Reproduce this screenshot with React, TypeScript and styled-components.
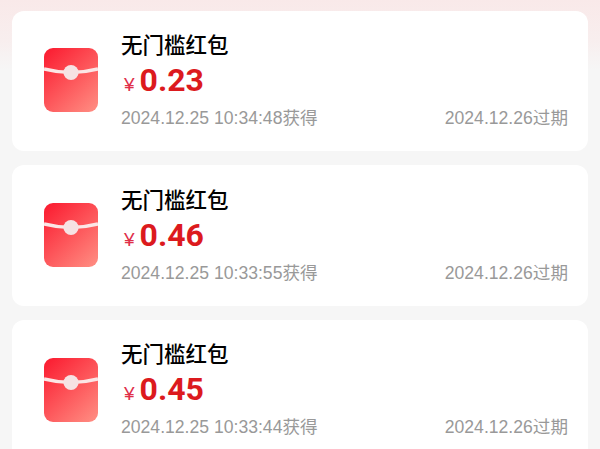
import React from 'react';
import styled, { createGlobalStyle } from 'styled-components';

const GlobalStyle = createGlobalStyle`
  html, body {
    margin: 0;
    padding: 0;
    height: 100%;
    overflow: hidden;
    background-color: #f6f6f6;
  }
`;

const Page = styled.div`
  display: flex;
  flex-direction: column;
  gap: 14px;
  height: 449px;
  padding: 10.5px 12px 0;
  box-sizing: border-box;
  overflow: hidden;
  background: linear-gradient(180deg, #f9e9e9 0, #f8eeee 40px, #f6f6f6 70px);
  font-family: 'Liberation Sans', 'Noto Sans CJK SC', sans-serif;
`;

const Card = styled.div`
  display: flex;
  flex-shrink: 0;
  align-items: center;
  height: 140.7px;
  padding: 0 20px 0 32px;
  box-sizing: border-box;
  background-color: #ffffff;
  border-radius: 12px;
`;

const EnvelopeIcon = styled.svg`
  flex-shrink: 0;
  width: 54px;
  height: 64px;
  margin: 0 23px 1px 0;
`;

const Info = styled.div`
  flex: 1;
  min-width: 0;
  margin-bottom: 2px;
`;

const Title = styled.div`
  color: #000000;
  font-family: 'Noto Sans CJK SC', sans-serif;
  font-size: 21.5px;
  font-weight: 500;
  line-height: 30px;
`;

const Amount = styled.div`
  display: flex;
  align-items: baseline;
  margin-top: 3px;
  color: #dc1a1e;
  line-height: 36px;
`;

const Currency = styled.span`
  margin: 0 5px 0 3px;
  color: #e0304a;
  font-size: 19px;
`;

const Value = styled.span`
  font-family: 'Roboto', sans-serif;
  font-size: 32px;
  font-weight: 700;
`;

const Meta = styled.div`
  display: flex;
  justify-content: space-between;
  margin-top: 2px;
  color: #999999;
  font-size: 17.6px;
  line-height: 26px;
`;

const Envelope: React.FC = () => (
  <EnvelopeIcon viewBox="0 0 54 64">
    <defs>
      <linearGradient id="packet" x1="0.1" y1="0" x2="0.9" y2="1">
        <stop offset="0" stopColor="#fb1e32" />
        <stop offset="1" stopColor="#ff8a80" />
      </linearGradient>
    </defs>
    <rect width="54" height="64" rx="9" fill="url(#packet)" />
    <path d="M0 21 Q27 28 54 21" fill="none" stroke="#fbe6e6" strokeWidth="3.4" />
    <circle cx="27" cy="24.5" r="7.6" fill="#f6e2e4" />
  </EnvelopeIcon>
);

const packets = [
  { amount: '0.23', received: '2024.12.25 10:34:48获得' },
  { amount: '0.46', received: '2024.12.25 10:33:55获得' },
  { amount: '0.45', received: '2024.12.25 10:33:44获得' },
];

const App: React.FC = () => (
  <React.Fragment>
    <GlobalStyle />
    <Page>
      {packets.map((packet) => (
        <Card key={packet.received}>
          <Envelope />
          <Info>
            <Title>无门槛红包</Title>
            <Amount>
              <Currency>¥</Currency>
              <Value>{packet.amount}</Value>
            </Amount>
            <Meta>
              <span>{packet.received}</span>
              <span>2024.12.26过期</span>
            </Meta>
          </Info>
        </Card>
      ))}
    </Page>
  </React.Fragment>
);

export default App;
